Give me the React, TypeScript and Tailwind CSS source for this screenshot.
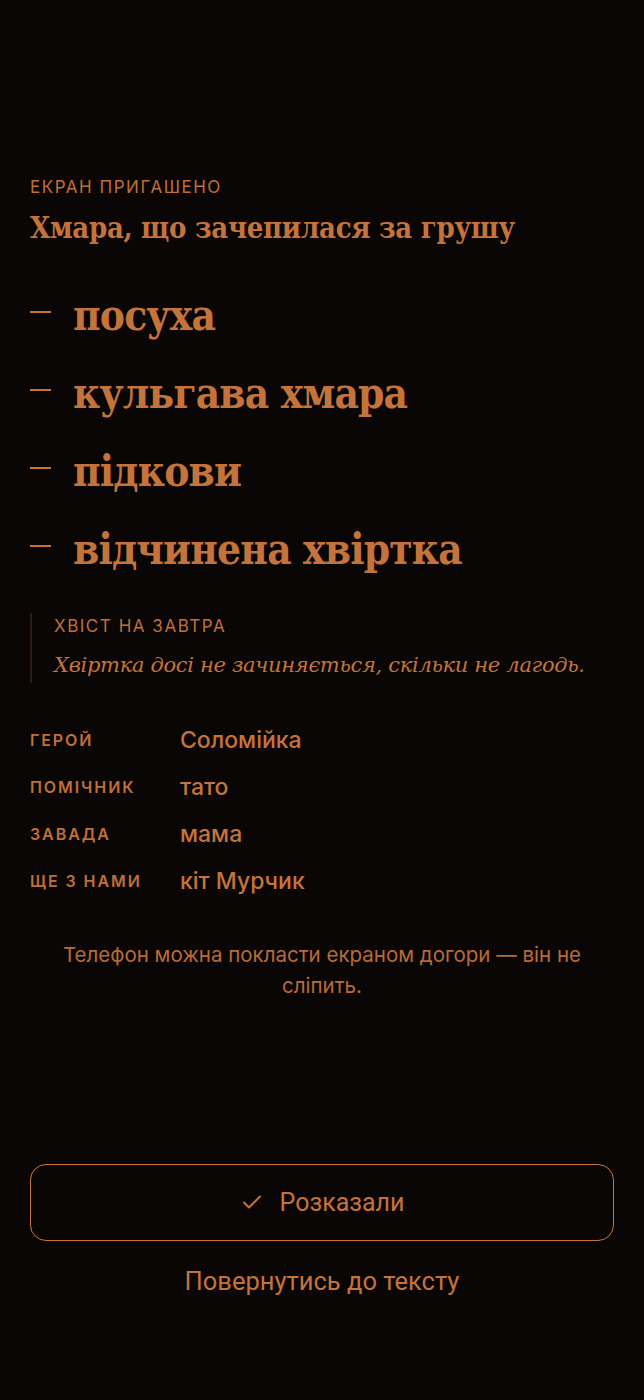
import React from "react";

const serif = { fontFamily: '"DejaVu Serif", "Liberation Serif", serif' };
const serifC = { fontFamily: '"DejaVu Serif Condensed", "DejaVu Serif", serif' };
const sans = { fontFamily: 'Inter, "Noto Sans", sans-serif' };
const roboto = { fontFamily: 'Roboto, "Noto Sans", sans-serif' };

const words = ["посуха", "кульгава хмара", "підкови", "відчинена хвіртка"];
const meta: [string, string][] = [
  ["герой", "Соломійка"],
  ["помічник", "тато"],
  ["завада", "мама"],
  ["ще з нами", "кіт Мурчик"],
];

export default function App() {
  return (
    <div className="min-h-[1400px] bg-[#0a0605] text-[#c4743b] flex flex-col px-[30px] pt-[176px] pb-[100px]" style={sans}>
      <div className="text-[17px] leading-[22px] tracking-[0.09em] uppercase text-[#c06f38]">Екран пригашено</div>
      <h1 className="mt-[11px] text-[29px] leading-[38px] font-bold tracking-[-0.01em]" style={serifC}>
        Хмара, що зачепилася за грушу
      </h1>
      <ul className="mt-[41px] flex flex-col gap-[22px]">
        {words.map((w) => (
          <li key={w} className="flex items-start">
            <span className="mt-[23px] w-[21px] h-[1.5px] bg-[#c4743b] shrink-0" />
            <span className="ml-[22px] text-[42px] leading-[56px] font-bold tracking-[-0.02em]" style={serifC}>
              {w}
            </span>
          </li>
        ))}
      </ul>
      <div className="mt-[35px] border-l-2 border-[#2a1c15] pl-[22px] py-[2px]">
        <div className="text-[17px] leading-[22px] tracking-[0.09em] uppercase text-[#c06f38]">Хвіст на завтра</div>
        <div className="mt-[12px] text-[21px] leading-[32px] italic tracking-[-0.015em]" style={serif}>
          Хвіртка досі не зачиняється, скільки не лагодь.
        </div>
      </div>
      <div className="mt-[42px] flex flex-col gap-[17px]">
        {meta.map(([k, v]) => (
          <div key={k} className="flex items-center h-[30px]">
            <div className="w-[150px] text-[16px] font-semibold uppercase tracking-[0.12em] text-[#c06f38]">{k}</div>
            <div className="text-[23px] font-medium">{v}</div>
          </div>
        ))}
      </div>
      <p className="mt-[43px] text-center text-[20.5px] leading-[31px] text-[#b86b36] px-[16px]">
        Телефон можна покласти екраном догори — він не сліпить.
      </p>
      <div className="flex-1" />
      <button className="h-[77px] w-full rounded-[16px] border-[1.5px] border-[#c4743b] flex items-center justify-center gap-[16px] text-[25px]" style={roboto}>
        <svg width="24" height="24" viewBox="0 0 24 24" fill="none" stroke="currentColor" strokeWidth="2" strokeLinecap="round" strokeLinejoin="round">
          <path d="M4 12.5l5 5L20 6.5" />
        </svg>
        <span>Розказали</span>
      </button>
      <div className="mt-[21px] text-center text-[25.5px]" style={roboto}>
        Повернутись до тексту
      </div>
    </div>
  );
}
